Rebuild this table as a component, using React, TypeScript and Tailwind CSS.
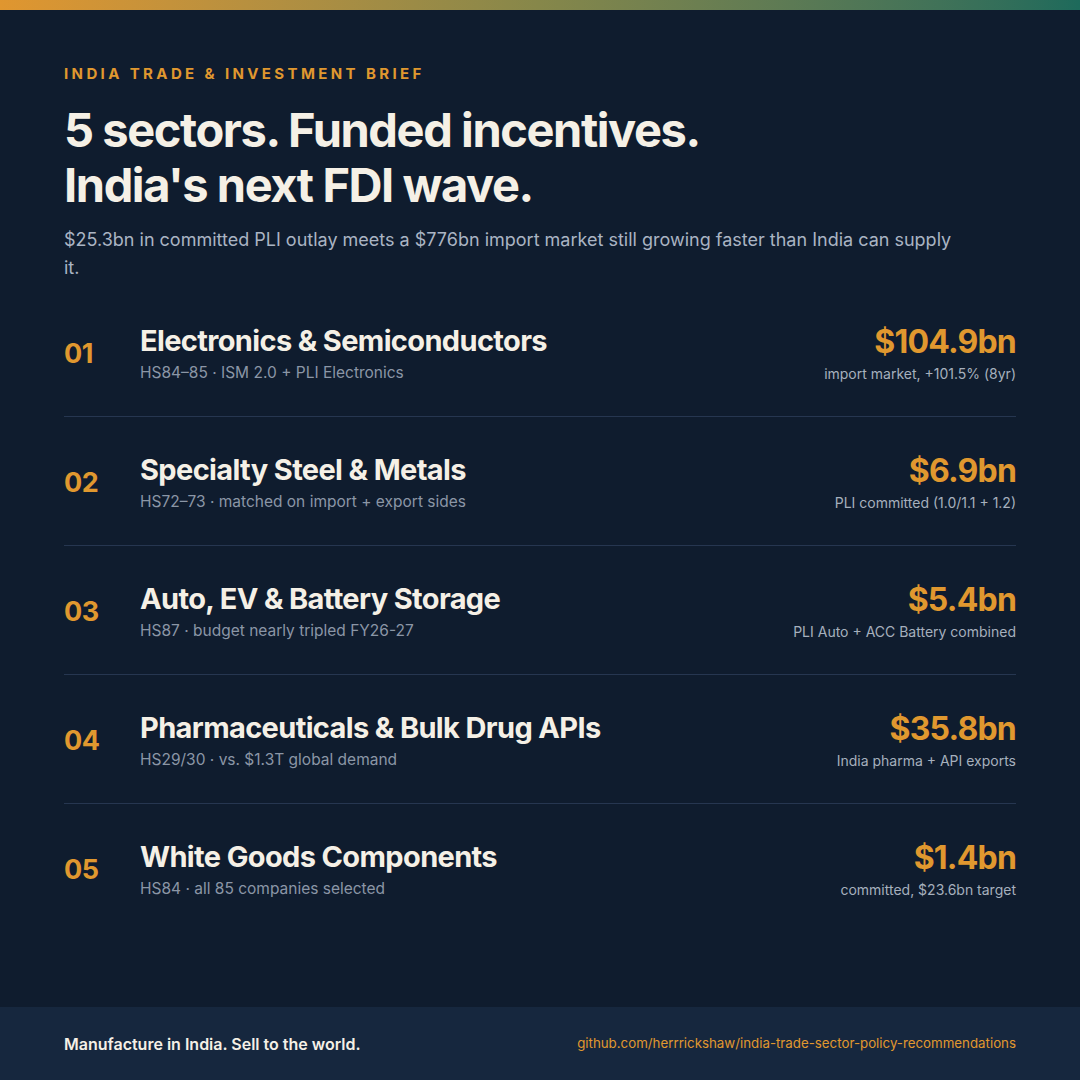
import React from "react";

const sectors = [
  {
    num: "01",
    title: "Electronics & Semiconductors",
    sub: "HS84–85 · ISM 2.0 + PLI Electronics",
    value: "$104.9bn",
    note: "import market, +101.5% (8yr)",
  },
  {
    num: "02",
    title: "Specialty Steel & Metals",
    sub: "HS72–73 · matched on import + export sides",
    value: "$6.9bn",
    note: "PLI committed (1.0/1.1 + 1.2)",
  },
  {
    num: "03",
    title: "Auto, EV & Battery Storage",
    sub: "HS87 · budget nearly tripled FY26-27",
    value: "$5.4bn",
    note: "PLI Auto + ACC Battery combined",
  },
  {
    num: "04",
    title: "Pharmaceuticals & Bulk Drug APIs",
    sub: "HS29/30 · vs. $1.3T global demand",
    value: "$35.8bn",
    note: "India pharma + API exports",
  },
  {
    num: "05",
    title: "White Goods Components",
    sub: "HS84 · all 85 companies selected",
    value: "$1.4bn",
    note: "committed, $23.6bn target",
  },
];

const App = () => {
  return (
    <div className="w-[1080px] h-[1080px] flex flex-col bg-[#0f1c2e] font-['Inter',sans-serif] overflow-hidden">
      <div className="h-[10px] w-full bg-gradient-to-r from-[#e0962f] via-[#86874a] to-[#1d6a5b]" />
      <div className="flex-1 flex flex-col px-[64px] pt-[54px]">
        <div className="text-[15px] leading-[20px] font-bold tracking-[0.225em] text-[#e0982f]">
          INDIA TRADE &amp; INVESTMENT BRIEF
        </div>
        <h1 className="mt-[18px] text-[47px] leading-[55px] font-bold tracking-[-0.03em] text-[#f5f0e6]">
          5 sectors. Funded incentives.
          <br />
          India's next FDI wave.
        </h1>
        <p className="mt-[14px] max-w-[895px] text-[18px] leading-[28px] text-[#aab4c3]">
          $25.3bn in committed PLI outlay meets a $776bn import market still
          growing faster than India can supply it.
        </p>
        <div className="mt-[6px] flex flex-col">
          {sectors.map((s, i) => (
            <div
              key={s.num}
              className={`flex items-center pt-[36px] pb-[32px] ${
                i < sectors.length - 1 ? "border-b border-[#263650]" : ""
              }`}
            >
              <div className="w-[76px] text-[27px] font-bold text-[#e0982f] tracking-[-0.02em]">
                {s.num}
              </div>
              <div className="flex-1 flex flex-col gap-[4px]">
                <div className="text-[29px] leading-[34px] font-bold tracking-[-0.022em] text-[#f5f0e6]">
                  {s.title}
                </div>
                <div className="text-[15.5px] leading-[22px] text-[#8b96a6]">
                  {s.sub}
                </div>
              </div>
              <div className="flex flex-col items-end gap-[4px]">
                <div className="text-[32px] leading-[36px] font-bold tracking-[-0.025em] text-[#e0982f]">
                  {s.value}
                </div>
                <div className="text-[14px] leading-[20px] text-[#a6b0bd]">
                  {s.note}
                </div>
              </div>
            </div>
          ))}
        </div>
      </div>
      <div className="h-[73px] flex items-center justify-between px-[64px] bg-[#16273e]">
        <div className="text-[16px] font-semibold text-[#f5f0e6]">
          Manufacture in India. Sell to the world.
        </div>
        <div className="text-[13.3px] text-[#e0982f]">
          github.com/herrrickshaw/india-trade-sector-policy-recommendations
        </div>
      </div>
    </div>
  );
};

export default App;
